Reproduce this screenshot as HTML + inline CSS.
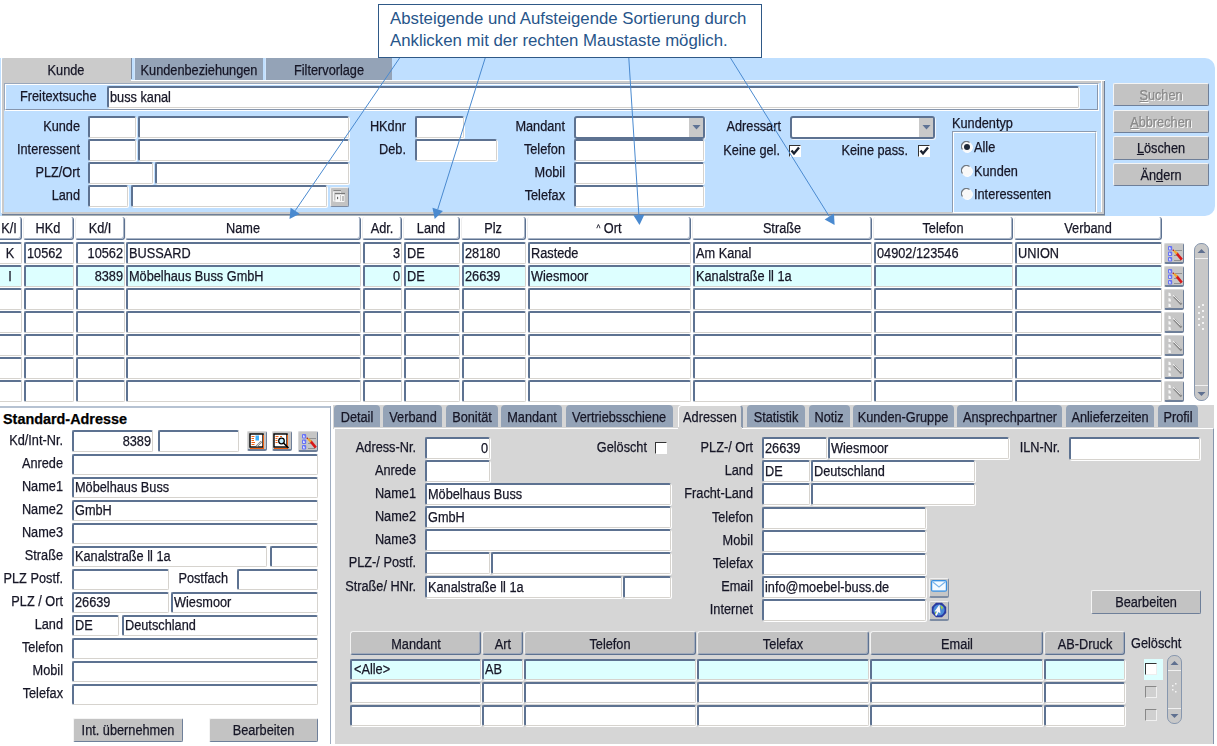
<!DOCTYPE html><html><head><meta charset="utf-8"><style>
html,body{margin:0;padding:0;width:1217px;height:746px;overflow:hidden;background:#fff;position:relative;}
.a{position:absolute;box-sizing:border-box;}
.t{position:absolute;white-space:nowrap;font-family:"Liberation Sans",sans-serif;line-height:20px;-webkit-text-stroke:0.25px currentColor;}
.inp{position:absolute;border-left:2px solid #5d7291;border-top:2px solid #5d7291;border-right:1px solid #d6d3ce;border-bottom:1px solid #d6d3ce;border-radius:2px;}
.btn{position:absolute;background:#c3c3c3;border-top:1px solid #f4f4f4;border-left:1px solid #f4f4f4;border-right:1px solid #6e7f99;border-bottom:1px solid #6e7f99;border-radius:2px;}
.hdr{position:absolute;box-sizing:border-box;background:#fff;border-left:1px solid #eeeeee;border-right:1px solid #5d7291;border-bottom:1px solid #5d7291;border-radius:3px;box-shadow:inset -1px -1px 0 #a9b5c6;}
</style></head><body>

<div class="a" style="left:0px;top:58px;width:1215px;height:158px;background:#bfdfff;border-radius:0 10px 10px 0;"></div>
<div class="a" style="left:1px;top:58px;width:1px;height:155px;background:#fff;"></div>
<div class="a" style="left:2px;top:80px;width:1103px;height:134px;background:#cacaca;"></div>
<div class="a" style="left:2px;top:80px;width:1103px;height:1px;background:#fff;"></div>
<div class="a" style="left:1101px;top:81px;width:1px;height:131px;background:#fff;"></div>
<div class="a" style="left:1104px;top:81px;width:1px;height:133px;background:#6e7f99;"></div>
<div class="a" style="left:2px;top:214px;width:1103px;height:1px;background:#6e7f99;"></div>
<div class="a" style="left:2px;top:215px;width:1103px;height:1px;background:#a9b1b4;"></div>
<div class="a" style="left:4px;top:83px;width:1097px;height:129px;background:#bfdfff;"></div>
<div class="a" style="left:2px;top:58px;width:129px;height:25px;background:#cbcbcb;border-radius:2px 0 0 0;"></div>
<div class="a" style="left:131px;top:58px;width:1px;height:21px;background:#7d8ca3;"></div>
<div class="t" style="left:5.5px;width:120px;text-align:center;top:60px;font-size:14.0px;color:#161626;font-weight:normal;transform:scaleX(0.91);transform-origin:50% 0;">Kunde</div>
<div class="a" style="left:134px;top:58px;width:129px;height:22px;background:#94a3b7;border-left:1px solid #d0e4fa;"></div>
<div class="t" style="left:99.0px;width:200px;text-align:center;top:60px;font-size:14.0px;color:#161626;font-weight:normal;transform:scaleX(0.91);transform-origin:50% 0;">Kundenbeziehungen</div>
<div class="a" style="left:265px;top:58px;width:127px;height:22px;background:#94a3b7;border-left:1px solid #d0e4fa;"></div>
<div class="t" style="left:229.0px;width:200px;text-align:center;top:60px;font-size:14.0px;color:#161626;font-weight:normal;transform:scaleX(0.91);transform-origin:50% 0;">Filtervorlage</div>
<div class="a" style="left:4px;top:83px;width:1095px;height:28px;border-top:1px solid #9aa8bc;border-left:1px solid #9aa8bc;border-right:1px solid #fff;border-bottom:1px solid #fff;"></div>
<div class="a" style="left:5px;top:84px;width:1093px;height:26px;border-top:1px solid #fff;border-left:1px solid #fff;border-right:1px solid #8796ad;border-bottom:1px solid #8796ad;"></div>
<div class="t" style="left:20px;top:86px;font-size:14.0px;color:#161626;font-weight:normal;transform:scaleX(0.91);transform-origin:0 0;">Freitextsuche</div>
<div class="inp" style="left:107px;top:86px;width:969px;height:19px;background:#fff;box-shadow:1px 1px 0 #fff;"></div>
<div class="t" style="left:110px;top:87px;font-size:14.0px;color:#161626;font-weight:normal;transform:scaleX(0.91);transform-origin:0 0;">buss kanal</div>
<div class="t" style="left:-320px;width:400px;text-align:right;top:116px;font-size:14.0px;color:#161626;font-weight:normal;transform:scaleX(0.91);transform-origin:100% 0;">Kunde</div>
<div class="t" style="left:-320px;width:400px;text-align:right;top:139px;font-size:14.0px;color:#161626;font-weight:normal;transform:scaleX(0.91);transform-origin:100% 0;">Interessent</div>
<div class="t" style="left:-320px;width:400px;text-align:right;top:162px;font-size:14.0px;color:#161626;font-weight:normal;transform:scaleX(0.91);transform-origin:100% 0;">PLZ/Ort</div>
<div class="t" style="left:-320px;width:400px;text-align:right;top:185px;font-size:14.0px;color:#161626;font-weight:normal;transform:scaleX(0.91);transform-origin:100% 0;">Land</div>
<div class="inp" style="left:88px;top:116px;width:45px;height:19px;background:#fff;box-shadow:1px 1px 0 #fff;"></div>
<div class="inp" style="left:138px;top:116px;width:208px;height:19px;background:#fff;box-shadow:1px 1px 0 #fff;"></div>
<div class="inp" style="left:88px;top:139px;width:45px;height:19px;background:#fff;box-shadow:1px 1px 0 #fff;"></div>
<div class="inp" style="left:138px;top:139px;width:208px;height:19px;background:#fff;box-shadow:1px 1px 0 #fff;"></div>
<div class="inp" style="left:88px;top:162px;width:62px;height:19px;background:#fff;box-shadow:1px 1px 0 #fff;"></div>
<div class="inp" style="left:155px;top:162px;width:191px;height:19px;background:#fff;box-shadow:1px 1px 0 #fff;"></div>
<div class="inp" style="left:88px;top:185px;width:37px;height:19px;background:#fff;box-shadow:1px 1px 0 #fff;"></div>
<div class="inp" style="left:131px;top:185px;width:193px;height:19px;background:#fff;box-shadow:1px 1px 0 #fff;"></div>
<div class="a" style="left:330px;top:187px;width:19px;height:20px;background:#c3c3c3;border-top:1px solid #f0f0f0;border-left:1px solid #f0f0f0;border-right:1px solid #7d8ca3;border-bottom:1px solid #7d8ca3;border-radius:2px;"></div>
<svg class="a" style="left:330px;top:187px" width="19" height="20" viewBox="0 0 19 20"><line x1="3.5" y1="3.5" x2="11" y2="3.5" stroke="#8a8a8a" stroke-width="1"/><rect x="3.5" y="5" width="7" height="9" fill="none" stroke="#f4f4f4" stroke-width="1"/><line x1="5" y1="6.5" x2="15" y2="6.5" stroke="#7a7a7a" stroke-width="1.2"/><rect x="5.5" y="7.5" width="9" height="7.5" fill="#f8f8f8"/><path d="M7 9.5 L8.5 11 L7 12.5 Z" fill="#555"/><line x1="10.5" y1="8.5" x2="10.5" y2="14" stroke="#999" stroke-dasharray="1 1"/><line x1="13" y1="9" x2="13" y2="14" stroke="#888"/></svg>
<div class="t" style="left:6px;width:400px;text-align:right;top:116px;font-size:14.0px;color:#161626;font-weight:normal;transform:scaleX(0.91);transform-origin:100% 0;">HKdnr</div>
<div class="t" style="left:6px;width:400px;text-align:right;top:139px;font-size:14.0px;color:#161626;font-weight:normal;transform:scaleX(0.91);transform-origin:100% 0;">Deb.</div>
<div class="inp" style="left:415px;top:116px;width:46px;height:19px;background:#fff;box-shadow:1px 1px 0 #fff;"></div>
<div class="inp" style="left:415px;top:139px;width:79px;height:19px;background:#fff;box-shadow:1px 1px 0 #fff;"></div>
<div class="t" style="left:165px;width:400px;text-align:right;top:116px;font-size:14.0px;color:#161626;font-weight:normal;transform:scaleX(0.91);transform-origin:100% 0;">Mandant</div>
<div class="a" style="left:574px;top:116px;width:131px;height:23px;background:#fff;border:2px solid #5d7291;border-radius:3px;box-shadow:1px 1px 0 #eef6ff;"></div>
<div class="a" style="left:689px;top:118px;width:14px;height:19px;background:#c9c9c9;"></div>
<svg class="a" style="left:692px;top:125px" width="9" height="5"><path d="M0.5 0 L8.5 0 L4.5 4.5 Z" fill="#5f7395"/></svg>
<div class="t" style="left:165px;width:400px;text-align:right;top:139px;font-size:14.0px;color:#161626;font-weight:normal;transform:scaleX(0.91);transform-origin:100% 0;">Telefon</div>
<div class="inp" style="left:574px;top:139px;width:127px;height:19px;background:#fff;box-shadow:1px 1px 0 #fff;"></div>
<div class="t" style="left:165px;width:400px;text-align:right;top:162px;font-size:14.0px;color:#161626;font-weight:normal;transform:scaleX(0.91);transform-origin:100% 0;">Mobil</div>
<div class="inp" style="left:574px;top:162px;width:127px;height:19px;background:#fff;box-shadow:1px 1px 0 #fff;"></div>
<div class="t" style="left:165px;width:400px;text-align:right;top:185px;font-size:14.0px;color:#161626;font-weight:normal;transform:scaleX(0.91);transform-origin:100% 0;">Telefax</div>
<div class="inp" style="left:574px;top:185px;width:127px;height:19px;background:#fff;box-shadow:1px 1px 0 #fff;"></div>
<div class="t" style="left:381px;width:400px;text-align:right;top:116px;font-size:14.0px;color:#161626;font-weight:normal;transform:scaleX(0.91);transform-origin:100% 0;">Adressart</div>
<div class="a" style="left:790px;top:116px;width:145px;height:23px;background:#fff;border:2px solid #5d7291;border-radius:3px;box-shadow:1px 1px 0 #eef6ff;"></div>
<div class="a" style="left:919px;top:118px;width:14px;height:19px;background:#c9c9c9;"></div>
<svg class="a" style="left:922px;top:125px" width="9" height="5"><path d="M0.5 0 L8.5 0 L4.5 4.5 Z" fill="#5f7395"/></svg>
<div class="t" style="left:380px;width:400px;text-align:right;top:140px;font-size:14.0px;color:#161626;font-weight:normal;transform:scaleX(0.91);transform-origin:100% 0;">Keine gel.</div>
<div class="t" style="left:508px;width:400px;text-align:right;top:140px;font-size:14.0px;color:#161626;font-weight:normal;transform:scaleX(0.91);transform-origin:100% 0;">Keine pass.</div>
<div class="a" style="left:789px;top:145px;width:12px;height:12px;background:#fff;border-top:1px solid #333;border-left:1px solid #333;border-right:1px solid #fff;border-bottom:1px solid #fff;"></div>
<svg class="a" style="left:790px;top:146px" width="10" height="10"><path d="M1.5 4.5 L4 7.5 L9 1.5" fill="none" stroke="#1a2230" stroke-width="2.4"/></svg>
<div class="a" style="left:918px;top:145px;width:12px;height:12px;background:#fff;border-top:1px solid #333;border-left:1px solid #333;border-right:1px solid #fff;border-bottom:1px solid #fff;"></div>
<svg class="a" style="left:919px;top:146px" width="10" height="10"><path d="M1.5 4.5 L4 7.5 L9 1.5" fill="none" stroke="#1a2230" stroke-width="2.4"/></svg>
<div class="t" style="left:952px;top:113px;font-size:14.0px;color:#161626;font-weight:normal;transform:scaleX(0.91);transform-origin:0 0;">Kundentyp</div>
<div class="a" style="left:952px;top:131px;width:145px;height:82px;border-top:1px solid #8c9bb0;border-left:1px solid #8c9bb0;border-right:1px solid #fff;border-bottom:1px solid #fff;"></div>
<div class="a" style="left:953px;top:132px;width:143px;height:80px;border-top:1px solid #fff;border-left:1px solid #fff;border-right:1px solid #a8b4c4;"></div>
<svg class="a" style="left:961px;top:141px" width="12" height="12" viewBox="0 0 12 12"><circle cx="6" cy="6" r="5.5" fill="#f8f8f8"/><path d="M1.5 8.5 A5 5 0 0 1 8.5 1.5" fill="none" stroke="#707880" stroke-width="1.2"/><path d="M10.8 4 A5 5 0 0 1 4 10.8" fill="none" stroke="#ffffff" stroke-width="1"/><circle cx="6" cy="6" r="3" fill="#1e2838"/></svg>
<div class="t" style="left:974px;top:137px;font-size:14.0px;color:#161626;font-weight:normal;transform:scaleX(0.91);transform-origin:0 0;">Alle</div>
<svg class="a" style="left:961px;top:165px" width="12" height="12" viewBox="0 0 12 12"><circle cx="6" cy="6" r="5.5" fill="#f8f8f8"/><path d="M1.5 8.5 A5 5 0 0 1 8.5 1.5" fill="none" stroke="#707880" stroke-width="1.2"/><path d="M10.8 4 A5 5 0 0 1 4 10.8" fill="none" stroke="#ffffff" stroke-width="1"/></svg>
<div class="t" style="left:974px;top:161px;font-size:14.0px;color:#161626;font-weight:normal;transform:scaleX(0.91);transform-origin:0 0;">Kunden</div>
<svg class="a" style="left:961px;top:188px" width="12" height="12" viewBox="0 0 12 12"><circle cx="6" cy="6" r="5.5" fill="#f8f8f8"/><path d="M1.5 8.5 A5 5 0 0 1 8.5 1.5" fill="none" stroke="#707880" stroke-width="1.2"/><path d="M10.8 4 A5 5 0 0 1 4 10.8" fill="none" stroke="#ffffff" stroke-width="1"/></svg>
<div class="t" style="left:974px;top:184px;font-size:14.0px;color:#161626;font-weight:normal;transform:scaleX(0.91);transform-origin:0 0;">Interessenten</div>
<div class="btn" style="left:1113px;top:83px;width:94px;height:21px;"></div>
<div class="t" style="left:1113.0px;width:96px;text-align:center;top:85px;font-size:14.0px;color:#8a8a8a;font-weight:normal;transform:scaleX(0.91);transform-origin:50% 0;text-shadow:1px 1px 0 #fff;"><u>S</u>uchen</div>
<div class="btn" style="left:1113px;top:110px;width:94px;height:21px;"></div>
<div class="t" style="left:1113.0px;width:96px;text-align:center;top:112px;font-size:14.0px;color:#8a8a8a;font-weight:normal;transform:scaleX(0.91);transform-origin:50% 0;text-shadow:1px 1px 0 #fff;"><u>A</u>bbrechen</div>
<div class="btn" style="left:1113px;top:136px;width:94px;height:22px;"></div>
<div class="t" style="left:1113.0px;width:96px;text-align:center;top:138px;font-size:14.0px;color:#161626;font-weight:normal;transform:scaleX(0.91);transform-origin:50% 0;"><u>L</u>öschen</div>
<div class="btn" style="left:1113px;top:163px;width:94px;height:21px;"></div>
<div class="t" style="left:1113.0px;width:96px;text-align:center;top:165px;font-size:14.0px;color:#161626;font-weight:normal;transform:scaleX(0.91);transform-origin:50% 0;">Än<u>d</u>ern</div>
<div class="hdr" style="left:-3px;top:217px;width:25px;height:23px;"></div>
<div class="t" style="left:-91.0px;width:200px;text-align:center;top:218px;font-size:14.0px;color:#161626;font-weight:normal;transform:scaleX(0.91);transform-origin:50% 0;">K/I</div>
<div class="hdr" style="left:23px;top:217px;width:51px;height:23px;"></div>
<div class="t" style="left:-52.0px;width:200px;text-align:center;top:218px;font-size:14.0px;color:#161626;font-weight:normal;transform:scaleX(0.91);transform-origin:50% 0;">HKd</div>
<div class="hdr" style="left:75px;top:217px;width:50px;height:23px;"></div>
<div class="t" style="left:-0.5px;width:200px;text-align:center;top:218px;font-size:14.0px;color:#161626;font-weight:normal;transform:scaleX(0.91);transform-origin:50% 0;">Kd/I</div>
<div class="hdr" style="left:125px;top:217px;width:236px;height:23px;"></div>
<div class="t" style="left:142.5px;width:200px;text-align:center;top:218px;font-size:14.0px;color:#161626;font-weight:normal;transform:scaleX(0.91);transform-origin:50% 0;">Name</div>
<div class="hdr" style="left:362px;top:217px;width:40px;height:23px;"></div>
<div class="t" style="left:281.5px;width:200px;text-align:center;top:218px;font-size:14.0px;color:#161626;font-weight:normal;transform:scaleX(0.91);transform-origin:50% 0;">Adr.</div>
<div class="hdr" style="left:403px;top:217px;width:57px;height:23px;"></div>
<div class="t" style="left:331.0px;width:200px;text-align:center;top:218px;font-size:14.0px;color:#161626;font-weight:normal;transform:scaleX(0.91);transform-origin:50% 0;">Land</div>
<div class="hdr" style="left:461px;top:217px;width:65px;height:23px;"></div>
<div class="t" style="left:393.0px;width:200px;text-align:center;top:218px;font-size:14.0px;color:#161626;font-weight:normal;transform:scaleX(0.91);transform-origin:50% 0;">Plz</div>
<div class="hdr" style="left:527px;top:217px;width:164px;height:23px;"></div>
<div class="t" style="left:509.0px;width:200px;text-align:center;top:218px;font-size:14.0px;color:#161626;font-weight:normal;transform:scaleX(0.91);transform-origin:50% 0;"><span style="font-size:9px;position:relative;top:-2px">^</span> Ort</div>
<div class="hdr" style="left:692px;top:217px;width:180px;height:23px;"></div>
<div class="t" style="left:681.5px;width:200px;text-align:center;top:218px;font-size:14.0px;color:#161626;font-weight:normal;transform:scaleX(0.91);transform-origin:50% 0;">Straße</div>
<div class="hdr" style="left:873px;top:217px;width:140px;height:23px;"></div>
<div class="t" style="left:842.5px;width:200px;text-align:center;top:218px;font-size:14.0px;color:#161626;font-weight:normal;transform:scaleX(0.91);transform-origin:50% 0;">Telefon</div>
<div class="hdr" style="left:1014px;top:217px;width:148px;height:23px;"></div>
<div class="t" style="left:987.5px;width:200px;text-align:center;top:218px;font-size:14.0px;color:#161626;font-weight:normal;transform:scaleX(0.91);transform-origin:50% 0;">Verband</div>
<div class="inp" style="left:-2px;top:242px;width:21px;height:19px;background:#fff;box-shadow:1px 1px 0 #fff;"></div>
<div class="t" style="left:-10.5px;width:40px;text-align:center;top:243px;font-size:14.0px;color:#161626;font-weight:normal;transform:scaleX(0.91);transform-origin:50% 0;">K</div>
<div class="inp" style="left:24px;top:242px;width:47px;height:19px;background:#fff;box-shadow:1px 1px 0 #fff;"></div>
<div class="t" style="left:27px;top:243px;font-size:14.0px;color:#161626;font-weight:normal;transform:scaleX(0.91);transform-origin:0 0;">10562</div>
<div class="inp" style="left:76px;top:242px;width:46px;height:19px;background:#fff;box-shadow:1px 1px 0 #fff;"></div>
<div class="t" style="left:-277px;width:400px;text-align:right;top:243px;font-size:14.0px;color:#161626;font-weight:normal;transform:scaleX(0.91);transform-origin:100% 0;">10562</div>
<div class="inp" style="left:126px;top:242px;width:232px;height:19px;background:#fff;box-shadow:1px 1px 0 #fff;"></div>
<div class="t" style="left:129px;top:243px;font-size:14.0px;color:#161626;font-weight:normal;transform:scaleX(0.91);transform-origin:0 0;">BUSSARD</div>
<div class="inp" style="left:363px;top:242px;width:36px;height:19px;background:#fff;box-shadow:1px 1px 0 #fff;"></div>
<div class="t" style="left:0px;width:400px;text-align:right;top:243px;font-size:14.0px;color:#161626;font-weight:normal;transform:scaleX(0.91);transform-origin:100% 0;">3</div>
<div class="inp" style="left:404px;top:242px;width:53px;height:19px;background:#fff;box-shadow:1px 1px 0 #fff;"></div>
<div class="t" style="left:407px;top:243px;font-size:14.0px;color:#161626;font-weight:normal;transform:scaleX(0.91);transform-origin:0 0;">DE</div>
<div class="inp" style="left:462px;top:242px;width:61px;height:19px;background:#fff;box-shadow:1px 1px 0 #fff;"></div>
<div class="t" style="left:465px;top:243px;font-size:14.0px;color:#161626;font-weight:normal;transform:scaleX(0.91);transform-origin:0 0;">28180</div>
<div class="inp" style="left:528px;top:242px;width:160px;height:19px;background:#fff;box-shadow:1px 1px 0 #fff;"></div>
<div class="t" style="left:531px;top:243px;font-size:14.0px;color:#161626;font-weight:normal;transform:scaleX(0.91);transform-origin:0 0;">Rastede</div>
<div class="inp" style="left:693px;top:242px;width:176px;height:19px;background:#fff;box-shadow:1px 1px 0 #fff;"></div>
<div class="t" style="left:696px;top:243px;font-size:14.0px;color:#161626;font-weight:normal;transform:scaleX(0.91);transform-origin:0 0;">Am Kanal</div>
<div class="inp" style="left:874px;top:242px;width:136px;height:19px;background:#fff;box-shadow:1px 1px 0 #fff;"></div>
<div class="t" style="left:877px;top:243px;font-size:14.0px;color:#161626;font-weight:normal;transform:scaleX(0.91);transform-origin:0 0;">04902/123546</div>
<div class="inp" style="left:1015px;top:242px;width:144px;height:19px;background:#fff;box-shadow:1px 1px 0 #fff;"></div>
<div class="t" style="left:1018px;top:243px;font-size:14.0px;color:#161626;font-weight:normal;transform:scaleX(0.91);transform-origin:0 0;">UNION</div>
<div class="a" style="left:1164px;top:243px;width:20px;height:21px;background:#c6c6c6;border-top:1px solid #d8d8d8;border-left:1px solid #d8d8d8;border-right:1px solid #6e7f99;border-bottom:2px solid #6e7f99;border-radius:2px;"></div>
<svg class="a" style="left:1164px;top:243px" width="20" height="21" viewBox="0 0 20 21"><rect x="4" y="3" width="4.2" height="4.6" rx="1" fill="#6672f6"/><rect x="4" y="8.5" width="4.2" height="4.6" rx="1" fill="#6672f6"/><rect x="4" y="14" width="4.2" height="4.6" rx="1" fill="#6672f6"/><path d="M5.2 4 L6.5 4.8 L6.8 6.6 L5.2 6.6 Z" fill="#f4f4ff"/><path d="M5.2 9.5 L6.5 10.3 L6.8 12.1 L5.2 12.1 Z" fill="#f4f4ff"/><path d="M5.2 15 L6.5 15.8 L6.8 17.6 L5.2 17.6 Z" fill="#f4f4ff"/><line x1="11" y1="7.5" x2="18" y2="7.5" stroke="#8c8c8c" stroke-width="0.9"/><line x1="10" y1="12.5" x2="13" y2="12.5" stroke="#8c8c8c" stroke-width="0.9"/><line x1="10" y1="17.5" x2="17" y2="17.5" stroke="#8c8c8c" stroke-width="0.9"/><line x1="12.5" y1="10.2" x2="17.8" y2="16.6" stroke="#d81818" stroke-width="2.6"/><line x1="10" y1="7.8" x2="13" y2="10.6" stroke="#f0a830" stroke-width="2.2"/><circle cx="9.3" cy="7.3" r="0.8" fill="#b01010"/></svg>
<div class="inp" style="left:-2px;top:265px;width:21px;height:19px;background:#ddffff;box-shadow:1px 1px 0 #fff;"></div>
<div class="t" style="left:-10.5px;width:40px;text-align:center;top:266px;font-size:14.0px;color:#161626;font-weight:normal;transform:scaleX(0.91);transform-origin:50% 0;">I</div>
<div class="inp" style="left:24px;top:265px;width:47px;height:19px;background:#ddffff;box-shadow:1px 1px 0 #fff;"></div>
<div class="inp" style="left:76px;top:265px;width:46px;height:19px;background:#ddffff;box-shadow:1px 1px 0 #fff;"></div>
<div class="t" style="left:-277px;width:400px;text-align:right;top:266px;font-size:14.0px;color:#161626;font-weight:normal;transform:scaleX(0.91);transform-origin:100% 0;">8389</div>
<div class="inp" style="left:126px;top:265px;width:232px;height:19px;background:#ddffff;box-shadow:1px 1px 0 #fff;"></div>
<div class="t" style="left:129px;top:266px;font-size:14.0px;color:#161626;font-weight:normal;transform:scaleX(0.91);transform-origin:0 0;">Möbelhaus Buss GmbH</div>
<div class="inp" style="left:363px;top:265px;width:36px;height:19px;background:#ddffff;box-shadow:1px 1px 0 #fff;"></div>
<div class="t" style="left:0px;width:400px;text-align:right;top:266px;font-size:14.0px;color:#161626;font-weight:normal;transform:scaleX(0.91);transform-origin:100% 0;">0</div>
<div class="inp" style="left:404px;top:265px;width:53px;height:19px;background:#ddffff;box-shadow:1px 1px 0 #fff;"></div>
<div class="t" style="left:407px;top:266px;font-size:14.0px;color:#161626;font-weight:normal;transform:scaleX(0.91);transform-origin:0 0;">DE</div>
<div class="inp" style="left:462px;top:265px;width:61px;height:19px;background:#ddffff;box-shadow:1px 1px 0 #fff;"></div>
<div class="t" style="left:465px;top:266px;font-size:14.0px;color:#161626;font-weight:normal;transform:scaleX(0.91);transform-origin:0 0;">26639</div>
<div class="inp" style="left:528px;top:265px;width:160px;height:19px;background:#ddffff;box-shadow:1px 1px 0 #fff;"></div>
<div class="t" style="left:531px;top:266px;font-size:14.0px;color:#161626;font-weight:normal;transform:scaleX(0.91);transform-origin:0 0;">Wiesmoor</div>
<div class="inp" style="left:693px;top:265px;width:176px;height:19px;background:#ddffff;box-shadow:1px 1px 0 #fff;"></div>
<div class="t" style="left:696px;top:266px;font-size:14.0px;color:#161626;font-weight:normal;transform:scaleX(0.91);transform-origin:0 0;">Kanalstraße ll 1a</div>
<div class="inp" style="left:874px;top:265px;width:136px;height:19px;background:#ddffff;box-shadow:1px 1px 0 #fff;"></div>
<div class="inp" style="left:1015px;top:265px;width:144px;height:19px;background:#ddffff;box-shadow:1px 1px 0 #fff;"></div>
<div class="a" style="left:1164px;top:266px;width:20px;height:21px;background:#c6c6c6;border-top:1px solid #d8d8d8;border-left:1px solid #d8d8d8;border-right:1px solid #6e7f99;border-bottom:2px solid #6e7f99;border-radius:2px;"></div>
<svg class="a" style="left:1164px;top:266px" width="20" height="21" viewBox="0 0 20 21"><rect x="4" y="3" width="4.2" height="4.6" rx="1" fill="#6672f6"/><rect x="4" y="8.5" width="4.2" height="4.6" rx="1" fill="#6672f6"/><rect x="4" y="14" width="4.2" height="4.6" rx="1" fill="#6672f6"/><path d="M5.2 4 L6.5 4.8 L6.8 6.6 L5.2 6.6 Z" fill="#f4f4ff"/><path d="M5.2 9.5 L6.5 10.3 L6.8 12.1 L5.2 12.1 Z" fill="#f4f4ff"/><path d="M5.2 15 L6.5 15.8 L6.8 17.6 L5.2 17.6 Z" fill="#f4f4ff"/><line x1="11" y1="7.5" x2="18" y2="7.5" stroke="#8c8c8c" stroke-width="0.9"/><line x1="10" y1="12.5" x2="13" y2="12.5" stroke="#8c8c8c" stroke-width="0.9"/><line x1="10" y1="17.5" x2="17" y2="17.5" stroke="#8c8c8c" stroke-width="0.9"/><line x1="12.5" y1="10.2" x2="17.8" y2="16.6" stroke="#d81818" stroke-width="2.6"/><line x1="10" y1="7.8" x2="13" y2="10.6" stroke="#f0a830" stroke-width="2.2"/><circle cx="9.3" cy="7.3" r="0.8" fill="#b01010"/></svg>
<div class="inp" style="left:-2px;top:288px;width:21px;height:19px;background:#fff;box-shadow:1px 1px 0 #fff;"></div>
<div class="inp" style="left:24px;top:288px;width:47px;height:19px;background:#fff;box-shadow:1px 1px 0 #fff;"></div>
<div class="inp" style="left:76px;top:288px;width:46px;height:19px;background:#fff;box-shadow:1px 1px 0 #fff;"></div>
<div class="inp" style="left:126px;top:288px;width:232px;height:19px;background:#fff;box-shadow:1px 1px 0 #fff;"></div>
<div class="inp" style="left:363px;top:288px;width:36px;height:19px;background:#fff;box-shadow:1px 1px 0 #fff;"></div>
<div class="inp" style="left:404px;top:288px;width:53px;height:19px;background:#fff;box-shadow:1px 1px 0 #fff;"></div>
<div class="inp" style="left:462px;top:288px;width:61px;height:19px;background:#fff;box-shadow:1px 1px 0 #fff;"></div>
<div class="inp" style="left:528px;top:288px;width:160px;height:19px;background:#fff;box-shadow:1px 1px 0 #fff;"></div>
<div class="inp" style="left:693px;top:288px;width:176px;height:19px;background:#fff;box-shadow:1px 1px 0 #fff;"></div>
<div class="inp" style="left:874px;top:288px;width:136px;height:19px;background:#fff;box-shadow:1px 1px 0 #fff;"></div>
<div class="inp" style="left:1015px;top:288px;width:144px;height:19px;background:#fff;box-shadow:1px 1px 0 #fff;"></div>
<div class="a" style="left:1164px;top:289px;width:20px;height:21px;background:#c6c6c6;border-top:1px solid #d8d8d8;border-left:1px solid #d8d8d8;border-right:1px solid #6e7f99;border-bottom:2px solid #6e7f99;border-radius:2px;"></div>
<svg class="a" style="left:1164px;top:289px" width="20" height="21" viewBox="0 0 20 21"><path d="M4.5 3.5 L6.5 4.3 L7 7 L4.5 7 Z" fill="#f8f8f8"/><path d="M4.5 9 L6.5 9.8 L7 12.5 L4.5 12.5 Z" fill="#f8f8f8"/><path d="M4.5 14.5 L6.5 15.3 L7 18 L4.5 18 Z" fill="#f8f8f8"/><line x1="10" y1="7.5" x2="17.5" y2="15.5" stroke="#8a8a8a" stroke-width="2.2"/><line x1="9" y1="6" x2="16.5" y2="13.5" stroke="#f0f0f0" stroke-width="0.9"/></svg>
<div class="inp" style="left:-2px;top:311px;width:21px;height:19px;background:#fff;box-shadow:1px 1px 0 #fff;"></div>
<div class="inp" style="left:24px;top:311px;width:47px;height:19px;background:#fff;box-shadow:1px 1px 0 #fff;"></div>
<div class="inp" style="left:76px;top:311px;width:46px;height:19px;background:#fff;box-shadow:1px 1px 0 #fff;"></div>
<div class="inp" style="left:126px;top:311px;width:232px;height:19px;background:#fff;box-shadow:1px 1px 0 #fff;"></div>
<div class="inp" style="left:363px;top:311px;width:36px;height:19px;background:#fff;box-shadow:1px 1px 0 #fff;"></div>
<div class="inp" style="left:404px;top:311px;width:53px;height:19px;background:#fff;box-shadow:1px 1px 0 #fff;"></div>
<div class="inp" style="left:462px;top:311px;width:61px;height:19px;background:#fff;box-shadow:1px 1px 0 #fff;"></div>
<div class="inp" style="left:528px;top:311px;width:160px;height:19px;background:#fff;box-shadow:1px 1px 0 #fff;"></div>
<div class="inp" style="left:693px;top:311px;width:176px;height:19px;background:#fff;box-shadow:1px 1px 0 #fff;"></div>
<div class="inp" style="left:874px;top:311px;width:136px;height:19px;background:#fff;box-shadow:1px 1px 0 #fff;"></div>
<div class="inp" style="left:1015px;top:311px;width:144px;height:19px;background:#fff;box-shadow:1px 1px 0 #fff;"></div>
<div class="a" style="left:1164px;top:312px;width:20px;height:21px;background:#c6c6c6;border-top:1px solid #d8d8d8;border-left:1px solid #d8d8d8;border-right:1px solid #6e7f99;border-bottom:2px solid #6e7f99;border-radius:2px;"></div>
<svg class="a" style="left:1164px;top:312px" width="20" height="21" viewBox="0 0 20 21"><path d="M4.5 3.5 L6.5 4.3 L7 7 L4.5 7 Z" fill="#f8f8f8"/><path d="M4.5 9 L6.5 9.8 L7 12.5 L4.5 12.5 Z" fill="#f8f8f8"/><path d="M4.5 14.5 L6.5 15.3 L7 18 L4.5 18 Z" fill="#f8f8f8"/><line x1="10" y1="7.5" x2="17.5" y2="15.5" stroke="#8a8a8a" stroke-width="2.2"/><line x1="9" y1="6" x2="16.5" y2="13.5" stroke="#f0f0f0" stroke-width="0.9"/></svg>
<div class="inp" style="left:-2px;top:334px;width:21px;height:19px;background:#fff;box-shadow:1px 1px 0 #fff;"></div>
<div class="inp" style="left:24px;top:334px;width:47px;height:19px;background:#fff;box-shadow:1px 1px 0 #fff;"></div>
<div class="inp" style="left:76px;top:334px;width:46px;height:19px;background:#fff;box-shadow:1px 1px 0 #fff;"></div>
<div class="inp" style="left:126px;top:334px;width:232px;height:19px;background:#fff;box-shadow:1px 1px 0 #fff;"></div>
<div class="inp" style="left:363px;top:334px;width:36px;height:19px;background:#fff;box-shadow:1px 1px 0 #fff;"></div>
<div class="inp" style="left:404px;top:334px;width:53px;height:19px;background:#fff;box-shadow:1px 1px 0 #fff;"></div>
<div class="inp" style="left:462px;top:334px;width:61px;height:19px;background:#fff;box-shadow:1px 1px 0 #fff;"></div>
<div class="inp" style="left:528px;top:334px;width:160px;height:19px;background:#fff;box-shadow:1px 1px 0 #fff;"></div>
<div class="inp" style="left:693px;top:334px;width:176px;height:19px;background:#fff;box-shadow:1px 1px 0 #fff;"></div>
<div class="inp" style="left:874px;top:334px;width:136px;height:19px;background:#fff;box-shadow:1px 1px 0 #fff;"></div>
<div class="inp" style="left:1015px;top:334px;width:144px;height:19px;background:#fff;box-shadow:1px 1px 0 #fff;"></div>
<div class="a" style="left:1164px;top:335px;width:20px;height:21px;background:#c6c6c6;border-top:1px solid #d8d8d8;border-left:1px solid #d8d8d8;border-right:1px solid #6e7f99;border-bottom:2px solid #6e7f99;border-radius:2px;"></div>
<svg class="a" style="left:1164px;top:335px" width="20" height="21" viewBox="0 0 20 21"><path d="M4.5 3.5 L6.5 4.3 L7 7 L4.5 7 Z" fill="#f8f8f8"/><path d="M4.5 9 L6.5 9.8 L7 12.5 L4.5 12.5 Z" fill="#f8f8f8"/><path d="M4.5 14.5 L6.5 15.3 L7 18 L4.5 18 Z" fill="#f8f8f8"/><line x1="10" y1="7.5" x2="17.5" y2="15.5" stroke="#8a8a8a" stroke-width="2.2"/><line x1="9" y1="6" x2="16.5" y2="13.5" stroke="#f0f0f0" stroke-width="0.9"/></svg>
<div class="inp" style="left:-2px;top:357px;width:21px;height:19px;background:#fff;box-shadow:1px 1px 0 #fff;"></div>
<div class="inp" style="left:24px;top:357px;width:47px;height:19px;background:#fff;box-shadow:1px 1px 0 #fff;"></div>
<div class="inp" style="left:76px;top:357px;width:46px;height:19px;background:#fff;box-shadow:1px 1px 0 #fff;"></div>
<div class="inp" style="left:126px;top:357px;width:232px;height:19px;background:#fff;box-shadow:1px 1px 0 #fff;"></div>
<div class="inp" style="left:363px;top:357px;width:36px;height:19px;background:#fff;box-shadow:1px 1px 0 #fff;"></div>
<div class="inp" style="left:404px;top:357px;width:53px;height:19px;background:#fff;box-shadow:1px 1px 0 #fff;"></div>
<div class="inp" style="left:462px;top:357px;width:61px;height:19px;background:#fff;box-shadow:1px 1px 0 #fff;"></div>
<div class="inp" style="left:528px;top:357px;width:160px;height:19px;background:#fff;box-shadow:1px 1px 0 #fff;"></div>
<div class="inp" style="left:693px;top:357px;width:176px;height:19px;background:#fff;box-shadow:1px 1px 0 #fff;"></div>
<div class="inp" style="left:874px;top:357px;width:136px;height:19px;background:#fff;box-shadow:1px 1px 0 #fff;"></div>
<div class="inp" style="left:1015px;top:357px;width:144px;height:19px;background:#fff;box-shadow:1px 1px 0 #fff;"></div>
<div class="a" style="left:1164px;top:358px;width:20px;height:21px;background:#c6c6c6;border-top:1px solid #d8d8d8;border-left:1px solid #d8d8d8;border-right:1px solid #6e7f99;border-bottom:2px solid #6e7f99;border-radius:2px;"></div>
<svg class="a" style="left:1164px;top:358px" width="20" height="21" viewBox="0 0 20 21"><path d="M4.5 3.5 L6.5 4.3 L7 7 L4.5 7 Z" fill="#f8f8f8"/><path d="M4.5 9 L6.5 9.8 L7 12.5 L4.5 12.5 Z" fill="#f8f8f8"/><path d="M4.5 14.5 L6.5 15.3 L7 18 L4.5 18 Z" fill="#f8f8f8"/><line x1="10" y1="7.5" x2="17.5" y2="15.5" stroke="#8a8a8a" stroke-width="2.2"/><line x1="9" y1="6" x2="16.5" y2="13.5" stroke="#f0f0f0" stroke-width="0.9"/></svg>
<div class="inp" style="left:-2px;top:380px;width:21px;height:19px;background:#fff;box-shadow:1px 1px 0 #fff;"></div>
<div class="inp" style="left:24px;top:380px;width:47px;height:19px;background:#fff;box-shadow:1px 1px 0 #fff;"></div>
<div class="inp" style="left:76px;top:380px;width:46px;height:19px;background:#fff;box-shadow:1px 1px 0 #fff;"></div>
<div class="inp" style="left:126px;top:380px;width:232px;height:19px;background:#fff;box-shadow:1px 1px 0 #fff;"></div>
<div class="inp" style="left:363px;top:380px;width:36px;height:19px;background:#fff;box-shadow:1px 1px 0 #fff;"></div>
<div class="inp" style="left:404px;top:380px;width:53px;height:19px;background:#fff;box-shadow:1px 1px 0 #fff;"></div>
<div class="inp" style="left:462px;top:380px;width:61px;height:19px;background:#fff;box-shadow:1px 1px 0 #fff;"></div>
<div class="inp" style="left:528px;top:380px;width:160px;height:19px;background:#fff;box-shadow:1px 1px 0 #fff;"></div>
<div class="inp" style="left:693px;top:380px;width:176px;height:19px;background:#fff;box-shadow:1px 1px 0 #fff;"></div>
<div class="inp" style="left:874px;top:380px;width:136px;height:19px;background:#fff;box-shadow:1px 1px 0 #fff;"></div>
<div class="inp" style="left:1015px;top:380px;width:144px;height:19px;background:#fff;box-shadow:1px 1px 0 #fff;"></div>
<div class="a" style="left:1164px;top:381px;width:20px;height:21px;background:#c6c6c6;border-top:1px solid #d8d8d8;border-left:1px solid #d8d8d8;border-right:1px solid #6e7f99;border-bottom:2px solid #6e7f99;border-radius:2px;"></div>
<svg class="a" style="left:1164px;top:381px" width="20" height="21" viewBox="0 0 20 21"><path d="M4.5 3.5 L6.5 4.3 L7 7 L4.5 7 Z" fill="#f8f8f8"/><path d="M4.5 9 L6.5 9.8 L7 12.5 L4.5 12.5 Z" fill="#f8f8f8"/><path d="M4.5 14.5 L6.5 15.3 L7 18 L4.5 18 Z" fill="#f8f8f8"/><line x1="10" y1="7.5" x2="17.5" y2="15.5" stroke="#8a8a8a" stroke-width="2.2"/><line x1="9" y1="6" x2="16.5" y2="13.5" stroke="#f0f0f0" stroke-width="0.9"/></svg>
<div class="a" style="left:1194px;top:243px;width:15px;height:158px;background:#c8c8c8;border:1px solid #8797ae;border-radius:7px;"></div>
<div class="a" style="left:1195px;top:258px;width:13px;height:1px;background:#f0f0f0;"></div>
<div class="a" style="left:1195px;top:385px;width:13px;height:1px;background:#f0f0f0;"></div>
<svg class="a" style="left:1196px;top:246px" width="11" height="10"><path d="M1.5 7 L5.5 3 L9.5 7 Z" fill="#5f7090"/></svg>
<svg class="a" style="left:1196px;top:389px" width="11" height="10"><path d="M1.5 3 L5.5 7 L9.5 3 Z" fill="#5f7090"/></svg>
<svg class="a" style="left:1197px;top:300px" width="10" height="40"><rect x="1" y="6" width="2" height="2" fill="#f4f4f4"/><rect x="5" y="4" width="2" height="2" fill="#f4f4f4"/><rect x="1" y="12" width="2" height="2" fill="#f4f4f4"/><rect x="5" y="10" width="2" height="2" fill="#f4f4f4"/><rect x="1" y="18" width="2" height="2" fill="#f4f4f4"/><rect x="5" y="16" width="2" height="2" fill="#f4f4f4"/><rect x="1" y="24" width="2" height="2" fill="#f4f4f4"/><rect x="5" y="22" width="2" height="2" fill="#f4f4f4"/><rect x="5" y="28" width="2" height="2" fill="#f4f4f4"/></svg>
<div class="a" style="left:0px;top:406px;width:331px;height:2px;background:#b6c2d2;"></div>
<div class="a" style="left:330px;top:406px;width:1px;height:338px;background:#9eacc0;"></div>
<div class="t" style="left:3px;top:409px;font-size:14.4px;color:#000;font-weight:bold;transform-origin:0 0;">Standard-Adresse</div>
<div class="t" style="left:-337px;width:400px;text-align:right;top:430px;font-size:14.0px;color:#161626;font-weight:normal;transform:scaleX(0.91);transform-origin:100% 0;">Kd/Int-Nr.</div>
<div class="t" style="left:-337px;width:400px;text-align:right;top:453px;font-size:14.0px;color:#161626;font-weight:normal;transform:scaleX(0.91);transform-origin:100% 0;">Anrede</div>
<div class="t" style="left:-337px;width:400px;text-align:right;top:476px;font-size:14.0px;color:#161626;font-weight:normal;transform:scaleX(0.91);transform-origin:100% 0;">Name1</div>
<div class="t" style="left:-337px;width:400px;text-align:right;top:499px;font-size:14.0px;color:#161626;font-weight:normal;transform:scaleX(0.91);transform-origin:100% 0;">Name2</div>
<div class="t" style="left:-337px;width:400px;text-align:right;top:522px;font-size:14.0px;color:#161626;font-weight:normal;transform:scaleX(0.91);transform-origin:100% 0;">Name3</div>
<div class="t" style="left:-337px;width:400px;text-align:right;top:545px;font-size:14.0px;color:#161626;font-weight:normal;transform:scaleX(0.91);transform-origin:100% 0;">Straße</div>
<div class="t" style="left:-337px;width:400px;text-align:right;top:568px;font-size:14.0px;color:#161626;font-weight:normal;transform:scaleX(0.91);transform-origin:100% 0;">PLZ Postf.</div>
<div class="t" style="left:-337px;width:400px;text-align:right;top:591px;font-size:14.0px;color:#161626;font-weight:normal;transform:scaleX(0.91);transform-origin:100% 0;">PLZ / Ort</div>
<div class="t" style="left:-337px;width:400px;text-align:right;top:614px;font-size:14.0px;color:#161626;font-weight:normal;transform:scaleX(0.91);transform-origin:100% 0;">Land</div>
<div class="t" style="left:-337px;width:400px;text-align:right;top:637px;font-size:14.0px;color:#161626;font-weight:normal;transform:scaleX(0.91);transform-origin:100% 0;">Telefon</div>
<div class="t" style="left:-337px;width:400px;text-align:right;top:660px;font-size:14.0px;color:#161626;font-weight:normal;transform:scaleX(0.91);transform-origin:100% 0;">Mobil</div>
<div class="t" style="left:-337px;width:400px;text-align:right;top:683px;font-size:14.0px;color:#161626;font-weight:normal;transform:scaleX(0.91);transform-origin:100% 0;">Telefax</div>
<div class="inp" style="left:72px;top:430px;width:78px;height:19px;background:#fff;box-shadow:1px 1px 0 #fff;"></div>
<div class="t" style="left:-249px;width:400px;text-align:right;top:431px;font-size:14.0px;color:#161626;font-weight:normal;transform:scaleX(0.91);transform-origin:100% 0;">8389</div>
<div class="inp" style="left:158px;top:430px;width:78px;height:19px;background:#fff;box-shadow:1px 1px 0 #fff;"></div>
<div class="a" style="left:247px;top:431px;width:20px;height:20px;background:#c6c6c6;border-top:1px solid #d8d8d8;border-left:1px solid #d8d8d8;border-right:1px solid #6e7f99;border-bottom:2px solid #6e7f99;border-radius:2px;"></div>
<svg class="a" style="left:247px;top:431px" width="20" height="20" viewBox="0 0 20 20"><rect x="3" y="3" width="13" height="13" fill="#fff" stroke="#000" stroke-width="1.4"/><line x1="16.5" y1="4" x2="16.5" y2="17" stroke="#f06010" stroke-width="1"/><line x1="3" y1="17.5" x2="17" y2="17.5" stroke="#f06010" stroke-width="1"/><line x1="4.5" y1="5.5" x2="7.5" y2="5.5" stroke="#f06010"/><line x1="4.5" y1="7.5" x2="7" y2="7.5" stroke="#f06010"/><line x1="4.5" y1="9.5" x2="7" y2="9.5" stroke="#f06010"/><line x1="4.5" y1="11.5" x2="8" y2="11.5" stroke="#f06010"/><line x1="4.5" y1="13.5" x2="7.5" y2="13.5" stroke="#f06010"/><rect x="8.5" y="4.5" width="3.5" height="5" fill="#40b0f8"/><path d="M9.5 15.5 L14.5 10.5" stroke="#888" stroke-width="2.2"/><path d="M10 15 L14 11" stroke="#ddd" stroke-width="0.8"/></svg>
<div class="a" style="left:272px;top:431px;width:20px;height:20px;background:#c6c6c6;border-top:1px solid #d8d8d8;border-left:1px solid #d8d8d8;border-right:1px solid #6e7f99;border-bottom:2px solid #6e7f99;border-radius:2px;"></div>
<svg class="a" style="left:272px;top:431px" width="20" height="20" viewBox="0 0 20 20"><rect x="2" y="3" width="13" height="13" fill="#fff" stroke="#000" stroke-width="1.4"/><line x1="15.5" y1="4" x2="15.5" y2="17" stroke="#f06010" stroke-width="1"/><line x1="2" y1="17.5" x2="16" y2="17.5" stroke="#f06010" stroke-width="1"/><line x1="3.5" y1="5.5" x2="6.5" y2="5.5" stroke="#f06010"/><line x1="8" y1="5.5" x2="10" y2="5.5" stroke="#f06010"/><line x1="3.5" y1="7.5" x2="5.5" y2="7.5" stroke="#f06010"/><line x1="3.5" y1="9.5" x2="5.5" y2="9.5" stroke="#f06010"/><line x1="3.5" y1="11.5" x2="5.5" y2="11.5" stroke="#f06010"/><circle cx="9.5" cy="10" r="2.8" fill="#c8f0ff" stroke="#000" stroke-width="1.3"/><line x1="11.5" y1="12" x2="16.5" y2="17" stroke="#000" stroke-width="1.6"/></svg>
<div class="a" style="left:298px;top:431px;width:20px;height:21px;background:#c6c6c6;border-top:1px solid #d8d8d8;border-left:1px solid #d8d8d8;border-right:1px solid #6e7f99;border-bottom:2px solid #6e7f99;border-radius:2px;"></div>
<svg class="a" style="left:298px;top:431px" width="20" height="21" viewBox="0 0 20 21"><rect x="4" y="3" width="4.2" height="4.6" rx="1" fill="#6672f6"/><rect x="4" y="8.5" width="4.2" height="4.6" rx="1" fill="#6672f6"/><rect x="4" y="14" width="4.2" height="4.6" rx="1" fill="#6672f6"/><path d="M5.2 4 L6.5 4.8 L6.8 6.6 L5.2 6.6 Z" fill="#f4f4ff"/><path d="M5.2 9.5 L6.5 10.3 L6.8 12.1 L5.2 12.1 Z" fill="#f4f4ff"/><path d="M5.2 15 L6.5 15.8 L6.8 17.6 L5.2 17.6 Z" fill="#f4f4ff"/><line x1="11" y1="7.5" x2="18" y2="7.5" stroke="#8c8c8c" stroke-width="0.9"/><line x1="10" y1="12.5" x2="13" y2="12.5" stroke="#8c8c8c" stroke-width="0.9"/><line x1="10" y1="17.5" x2="17" y2="17.5" stroke="#8c8c8c" stroke-width="0.9"/><line x1="12.5" y1="10.2" x2="17.8" y2="16.6" stroke="#d81818" stroke-width="2.6"/><line x1="10" y1="7.8" x2="13" y2="10.6" stroke="#f0a830" stroke-width="2.2"/><circle cx="9.3" cy="7.3" r="0.8" fill="#b01010"/></svg>
<div class="inp" style="left:72px;top:454px;width:243px;height:18px;background:#fff;box-shadow:1px 1px 0 #fff;"></div>
<div class="inp" style="left:72px;top:477px;width:243px;height:18px;background:#fff;box-shadow:1px 1px 0 #fff;"></div>
<div class="t" style="left:75px;top:477px;font-size:14.0px;color:#161626;font-weight:normal;transform:scaleX(0.91);transform-origin:0 0;">Möbelhaus Buss</div>
<div class="inp" style="left:72px;top:500px;width:243px;height:18px;background:#fff;box-shadow:1px 1px 0 #fff;"></div>
<div class="t" style="left:75px;top:500px;font-size:14.0px;color:#161626;font-weight:normal;transform:scaleX(0.91);transform-origin:0 0;">GmbH</div>
<div class="inp" style="left:72px;top:523px;width:243px;height:18px;background:#fff;box-shadow:1px 1px 0 #fff;"></div>
<div class="inp" style="left:72px;top:546px;width:192px;height:18px;background:#fff;box-shadow:1px 1px 0 #fff;"></div>
<div class="t" style="left:75px;top:546px;font-size:14.0px;color:#161626;font-weight:normal;transform:scaleX(0.91);transform-origin:0 0;">Kanalstraße ll 1a</div>
<div class="inp" style="left:270px;top:546px;width:45px;height:18px;background:#fff;box-shadow:1px 1px 0 #fff;"></div>
<div class="inp" style="left:72px;top:569px;width:94px;height:18px;background:#fff;box-shadow:1px 1px 0 #fff;"></div>
<div class="t" style="left:-172px;width:400px;text-align:right;top:568px;font-size:14.0px;color:#161626;font-weight:normal;transform:scaleX(0.91);transform-origin:100% 0;">Postfach</div>
<div class="inp" style="left:237px;top:569px;width:78px;height:18px;background:#fff;box-shadow:1px 1px 0 #fff;"></div>
<div class="inp" style="left:72px;top:592px;width:94px;height:18px;background:#fff;box-shadow:1px 1px 0 #fff;"></div>
<div class="t" style="left:75px;top:592px;font-size:14.0px;color:#161626;font-weight:normal;transform:scaleX(0.91);transform-origin:0 0;">26639</div>
<div class="inp" style="left:171px;top:592px;width:144px;height:18px;background:#fff;box-shadow:1px 1px 0 #fff;"></div>
<div class="t" style="left:174px;top:592px;font-size:14.0px;color:#161626;font-weight:normal;transform:scaleX(0.91);transform-origin:0 0;">Wiesmoor</div>
<div class="inp" style="left:72px;top:615px;width:44px;height:18px;background:#fff;box-shadow:1px 1px 0 #fff;"></div>
<div class="t" style="left:75px;top:615px;font-size:14.0px;color:#161626;font-weight:normal;transform:scaleX(0.91);transform-origin:0 0;">DE</div>
<div class="inp" style="left:122px;top:615px;width:193px;height:18px;background:#fff;box-shadow:1px 1px 0 #fff;"></div>
<div class="t" style="left:125px;top:615px;font-size:14.0px;color:#161626;font-weight:normal;transform:scaleX(0.91);transform-origin:0 0;">Deutschland</div>
<div class="inp" style="left:72px;top:638px;width:243px;height:18px;background:#fff;box-shadow:1px 1px 0 #fff;"></div>
<div class="inp" style="left:72px;top:661px;width:243px;height:18px;background:#fff;box-shadow:1px 1px 0 #fff;"></div>
<div class="inp" style="left:72px;top:684px;width:243px;height:18px;background:#fff;box-shadow:1px 1px 0 #fff;"></div>
<div class="btn" style="left:73px;top:718px;width:108px;height:22px;"></div>
<div class="t" style="left:73.0px;width:110px;text-align:center;top:720px;font-size:14.0px;color:#161626;font-weight:normal;transform:scaleX(0.91);transform-origin:50% 0;">Int. übernehmen</div>
<div class="btn" style="left:209px;top:718px;width:107px;height:22px;"></div>
<div class="t" style="left:209.0px;width:109px;text-align:center;top:720px;font-size:14.0px;color:#161626;font-weight:normal;transform:scaleX(0.91);transform-origin:50% 0;">Bearbeiten</div>
<div class="a" style="left:333px;top:405px;width:881px;height:24px;background:#d6d6d6;"></div>
<div class="a" style="left:333.5px;top:405px;width:46.5px;height:22px;background:#94a3b7;border-radius:4px 4px 0 0;"></div>
<div class="t" style="left:256.75px;width:200px;text-align:center;top:407px;font-size:14.0px;color:#161626;font-weight:normal;transform:scaleX(0.91);transform-origin:50% 0;">Detail</div>
<div class="a" style="left:383px;top:405px;width:59px;height:22px;background:#94a3b7;border-radius:4px 4px 0 0;"></div>
<div class="t" style="left:312.5px;width:200px;text-align:center;top:407px;font-size:14.0px;color:#161626;font-weight:normal;transform:scaleX(0.91);transform-origin:50% 0;">Verband</div>
<div class="a" style="left:446px;top:405px;width:51.5px;height:22px;background:#94a3b7;border-radius:4px 4px 0 0;"></div>
<div class="t" style="left:371.75px;width:200px;text-align:center;top:407px;font-size:14.0px;color:#161626;font-weight:normal;transform:scaleX(0.91);transform-origin:50% 0;">Bonität</div>
<div class="a" style="left:501px;top:405px;width:61px;height:22px;background:#94a3b7;border-radius:4px 4px 0 0;"></div>
<div class="t" style="left:431.5px;width:200px;text-align:center;top:407px;font-size:14.0px;color:#161626;font-weight:normal;transform:scaleX(0.91);transform-origin:50% 0;">Mandant</div>
<div class="a" style="left:565.5px;top:405px;width:107.5px;height:22px;background:#94a3b7;border-radius:4px 4px 0 0;"></div>
<div class="t" style="left:519.25px;width:200px;text-align:center;top:407px;font-size:14.0px;color:#161626;font-weight:normal;transform:scaleX(0.91);transform-origin:50% 0;">Vertriebsschiene</div>
<div class="a" style="left:677.5px;top:405px;width:65.5px;height:25px;background:#d6d6d6;border-left:1px solid #fff;border-top:1px solid #fff;border-right:2px solid #8a98ac;border-radius:4px 4px 0 0;"></div>
<div class="t" style="left:610.25px;width:200px;text-align:center;top:407px;font-size:14.0px;color:#161626;font-weight:normal;transform:scaleX(0.91);transform-origin:50% 0;">Adressen</div>
<div class="a" style="left:746.5px;top:405px;width:58.5px;height:22px;background:#94a3b7;border-radius:4px 4px 0 0;"></div>
<div class="t" style="left:675.75px;width:200px;text-align:center;top:407px;font-size:14.0px;color:#161626;font-weight:normal;transform:scaleX(0.91);transform-origin:50% 0;">Statistik</div>
<div class="a" style="left:808.5px;top:405px;width:41.0px;height:22px;background:#94a3b7;border-radius:4px 4px 0 0;"></div>
<div class="t" style="left:729.0px;width:200px;text-align:center;top:407px;font-size:14.0px;color:#161626;font-weight:normal;transform:scaleX(0.91);transform-origin:50% 0;">Notiz</div>
<div class="a" style="left:853px;top:405px;width:100.5px;height:22px;background:#94a3b7;border-radius:4px 4px 0 0;"></div>
<div class="t" style="left:803.25px;width:200px;text-align:center;top:407px;font-size:14.0px;color:#161626;font-weight:normal;transform:scaleX(0.91);transform-origin:50% 0;">Kunden-Gruppe</div>
<div class="a" style="left:957px;top:405px;width:105px;height:22px;background:#94a3b7;border-radius:4px 4px 0 0;"></div>
<div class="t" style="left:909.5px;width:200px;text-align:center;top:407px;font-size:14.0px;color:#161626;font-weight:normal;transform:scaleX(0.91);transform-origin:50% 0;">Ansprechpartner</div>
<div class="a" style="left:1066px;top:405px;width:88px;height:22px;background:#94a3b7;border-radius:4px 4px 0 0;"></div>
<div class="t" style="left:1010.0px;width:200px;text-align:center;top:407px;font-size:14.0px;color:#161626;font-weight:normal;transform:scaleX(0.91);transform-origin:50% 0;">Anlieferzeiten</div>
<div class="a" style="left:1158px;top:405px;width:40px;height:22px;background:#94a3b7;border-radius:4px 4px 0 0;"></div>
<div class="t" style="left:1078.0px;width:200px;text-align:center;top:407px;font-size:14.0px;color:#161626;font-weight:normal;transform:scaleX(0.91);transform-origin:50% 0;">Profil</div>
<div class="a" style="left:334px;top:428px;width:880px;height:316px;background:#d6d6d6;border-left:1px solid #fff;border-top:1px solid #fff;border-right:1px solid #8796ac;"></div>
<div class="a" style="left:678px;top:427px;width:64px;height:3px;background:#d6d6d6;"></div>
<div class="t" style="left:16px;width:400px;text-align:right;top:437px;font-size:14.0px;color:#161626;font-weight:normal;transform:scaleX(0.91);transform-origin:100% 0;">Adress-Nr.</div>
<div class="t" style="left:16px;width:400px;text-align:right;top:460px;font-size:14.0px;color:#161626;font-weight:normal;transform:scaleX(0.91);transform-origin:100% 0;">Anrede</div>
<div class="t" style="left:16px;width:400px;text-align:right;top:483px;font-size:14.0px;color:#161626;font-weight:normal;transform:scaleX(0.91);transform-origin:100% 0;">Name1</div>
<div class="t" style="left:16px;width:400px;text-align:right;top:506px;font-size:14.0px;color:#161626;font-weight:normal;transform:scaleX(0.91);transform-origin:100% 0;">Name2</div>
<div class="t" style="left:16px;width:400px;text-align:right;top:529px;font-size:14.0px;color:#161626;font-weight:normal;transform:scaleX(0.91);transform-origin:100% 0;">Name3</div>
<div class="t" style="left:16px;width:400px;text-align:right;top:552px;font-size:14.0px;color:#161626;font-weight:normal;transform:scaleX(0.91);transform-origin:100% 0;">PLZ-/ Postf.</div>
<div class="t" style="left:16px;width:400px;text-align:right;top:576px;font-size:14.0px;color:#161626;font-weight:normal;transform:scaleX(0.91);transform-origin:100% 0;">Straße/ HNr.</div>
<div class="inp" style="left:425px;top:437px;width:62px;height:19px;background:#fff;box-shadow:1px 1px 0 #fff;"></div>
<div class="t" style="left:88px;width:400px;text-align:right;top:438px;font-size:14.0px;color:#161626;font-weight:normal;transform:scaleX(0.91);transform-origin:100% 0;">0</div>
<div class="inp" style="left:425px;top:460px;width:62px;height:19px;background:#fff;box-shadow:1px 1px 0 #fff;"></div>
<div class="inp" style="left:425px;top:483px;width:243px;height:19px;background:#fff;box-shadow:1px 1px 0 #fff;"></div>
<div class="t" style="left:428px;top:484px;font-size:14.0px;color:#161626;font-weight:normal;transform:scaleX(0.91);transform-origin:0 0;">Möbelhaus Buss</div>
<div class="inp" style="left:425px;top:506px;width:243px;height:19px;background:#fff;box-shadow:1px 1px 0 #fff;"></div>
<div class="t" style="left:428px;top:507px;font-size:14.0px;color:#161626;font-weight:normal;transform:scaleX(0.91);transform-origin:0 0;">GmbH</div>
<div class="inp" style="left:425px;top:529px;width:243px;height:19px;background:#fff;box-shadow:1px 1px 0 #fff;"></div>
<div class="inp" style="left:425px;top:552px;width:62px;height:19px;background:#fff;box-shadow:1px 1px 0 #fff;"></div>
<div class="inp" style="left:491px;top:552px;width:177px;height:19px;background:#fff;box-shadow:1px 1px 0 #fff;"></div>
<div class="inp" style="left:425px;top:576px;width:194px;height:19px;background:#fff;box-shadow:1px 1px 0 #fff;"></div>
<div class="t" style="left:428px;top:577px;font-size:14.0px;color:#161626;font-weight:normal;transform:scaleX(0.91);transform-origin:0 0;">Kanalstraße ll 1a</div>
<div class="inp" style="left:623px;top:576px;width:45px;height:19px;background:#fff;box-shadow:1px 1px 0 #fff;"></div>
<div class="t" style="left:247px;width:400px;text-align:right;top:437px;font-size:14.0px;color:#161626;font-weight:normal;transform:scaleX(0.91);transform-origin:100% 0;">Gelöscht</div>
<div class="a" style="left:655px;top:442px;width:12px;height:12px;background:#fff;border-top:1px solid #333;border-left:1px solid #333;border-right:1px solid #fff;border-bottom:1px solid #fff;"></div>
<div class="t" style="left:353px;width:400px;text-align:right;top:437px;font-size:14.0px;color:#161626;font-weight:normal;transform:scaleX(0.91);transform-origin:100% 0;">PLZ-/ Ort</div>
<div class="t" style="left:353px;width:400px;text-align:right;top:460px;font-size:14.0px;color:#161626;font-weight:normal;transform:scaleX(0.91);transform-origin:100% 0;">Land</div>
<div class="t" style="left:353px;width:400px;text-align:right;top:483px;font-size:14.0px;color:#161626;font-weight:normal;transform:scaleX(0.91);transform-origin:100% 0;">Fracht-Land</div>
<div class="t" style="left:353px;width:400px;text-align:right;top:507px;font-size:14.0px;color:#161626;font-weight:normal;transform:scaleX(0.91);transform-origin:100% 0;">Telefon</div>
<div class="t" style="left:353px;width:400px;text-align:right;top:530px;font-size:14.0px;color:#161626;font-weight:normal;transform:scaleX(0.91);transform-origin:100% 0;">Mobil</div>
<div class="t" style="left:353px;width:400px;text-align:right;top:553px;font-size:14.0px;color:#161626;font-weight:normal;transform:scaleX(0.91);transform-origin:100% 0;">Telefax</div>
<div class="t" style="left:353px;width:400px;text-align:right;top:576px;font-size:14.0px;color:#161626;font-weight:normal;transform:scaleX(0.91);transform-origin:100% 0;">Email</div>
<div class="t" style="left:353px;width:400px;text-align:right;top:599px;font-size:14.0px;color:#161626;font-weight:normal;transform:scaleX(0.91);transform-origin:100% 0;">Internet</div>
<div class="inp" style="left:762px;top:437px;width:62px;height:19px;background:#fff;box-shadow:1px 1px 0 #fff;"></div>
<div class="t" style="left:765px;top:438px;font-size:14.0px;color:#161626;font-weight:normal;transform:scaleX(0.91);transform-origin:0 0;">26639</div>
<div class="inp" style="left:828px;top:437px;width:178px;height:19px;background:#fff;box-shadow:1px 1px 0 #fff;"></div>
<div class="t" style="left:831px;top:438px;font-size:14.0px;color:#161626;font-weight:normal;transform:scaleX(0.91);transform-origin:0 0;">Wiesmoor</div>
<div class="inp" style="left:762px;top:460px;width:45px;height:19px;background:#fff;box-shadow:1px 1px 0 #fff;"></div>
<div class="t" style="left:765px;top:461px;font-size:14.0px;color:#161626;font-weight:normal;transform:scaleX(0.91);transform-origin:0 0;">DE</div>
<div class="inp" style="left:811px;top:460px;width:161px;height:19px;background:#fff;box-shadow:1px 1px 0 #fff;"></div>
<div class="t" style="left:814px;top:461px;font-size:14.0px;color:#161626;font-weight:normal;transform:scaleX(0.91);transform-origin:0 0;">Deutschland</div>
<div class="inp" style="left:762px;top:483px;width:45px;height:19px;background:#fff;box-shadow:1px 1px 0 #fff;"></div>
<div class="inp" style="left:811px;top:483px;width:161px;height:19px;background:#fff;box-shadow:1px 1px 0 #fff;"></div>
<div class="inp" style="left:762px;top:507px;width:161px;height:19px;background:#fff;box-shadow:1px 1px 0 #fff;"></div>
<div class="inp" style="left:762px;top:530px;width:161px;height:19px;background:#fff;box-shadow:1px 1px 0 #fff;"></div>
<div class="inp" style="left:762px;top:553px;width:161px;height:19px;background:#fff;box-shadow:1px 1px 0 #fff;"></div>
<div class="inp" style="left:762px;top:576px;width:161px;height:19px;background:#fff;box-shadow:1px 1px 0 #fff;"></div>
<div class="t" style="left:765px;top:577px;font-size:14.0px;color:#161626;font-weight:normal;transform:scaleX(0.91);transform-origin:0 0;">info@moebel-buss.de</div>
<div class="inp" style="left:762px;top:599px;width:161px;height:19px;background:#fff;box-shadow:1px 1px 0 #fff;"></div>
<div class="a" style="left:929px;top:578px;width:20px;height:20px;background:#c6c6c6;border-top:1px solid #f0f0f0;border-left:1px solid #f0f0f0;border-right:1px solid #7d8ca3;border-bottom:2px solid #7d8ca3;border-radius:2px;"></div>
<svg class="a" style="left:929px;top:578px" width="20" height="20" viewBox="0 0 20 20"><rect x="2.5" y="2.7" width="15" height="10.5" rx="1.5" fill="#d8ecff" stroke="#3a90e0" stroke-width="1.2"/><rect x="4" y="4" width="12" height="8" fill="#f4faff"/><path d="M3.5 3.8 L10 9 L16.5 3.8" fill="none" stroke="#7ab4ea" stroke-width="1.1"/></svg>
<div class="a" style="left:929px;top:601px;width:20px;height:20px;background:#c6c6c6;border-top:1px solid #f0f0f0;border-left:1px solid #f0f0f0;border-right:1px solid #7d8ca3;border-bottom:2px solid #7d8ca3;border-radius:2px;"></div>
<svg class="a" style="left:929px;top:601px" width="20" height="20" viewBox="0 0 20 20"><path d="M7 1.8 L13 1.8 L17.2 6 L17.2 12 L13 16.2 L7 16.2 L2.8 12 L2.8 6 Z" fill="#2a3aa0"/><circle cx="10" cy="9" r="5.6" fill="#4a8ad8"/><path d="M11 4 L14 6 L13 9 Z" fill="#a8d040"/><path d="M6 10 L8 13 L6 13 Z" fill="#90c040"/><path d="M10.5 3.5 L11.5 12.5 L9.5 11 L7.5 15 L6 14 L8 10.5 L5.5 10.5 Z" fill="#fafafa"/></svg>
<div class="t" style="left:660px;width:400px;text-align:right;top:437px;font-size:14.0px;color:#161626;font-weight:normal;transform:scaleX(0.91);transform-origin:100% 0;">ILN-Nr.</div>
<div class="inp" style="left:1069px;top:437px;width:128px;height:20px;background:#fff;box-shadow:1px 1px 0 #fff;"></div>
<div class="btn" style="left:1091px;top:590px;width:108px;height:22px;"></div>
<div class="t" style="left:1091.0px;width:110px;text-align:center;top:592px;font-size:14.0px;color:#161626;font-weight:normal;transform:scaleX(0.91);transform-origin:50% 0;">Bearbeiten</div>
<div class="a" style="left:350px;top:631px;width:131px;height:24px;background:#c2c2c2;border-top:1px solid #f2f2f2;border-left:1px solid #f2f2f2;border-right:1px solid #5d7291;border-bottom:1px solid #5d7291;border-radius:3px;box-shadow:inset -1px -1px 0 #a0aabb;"></div>
<div class="t" style="left:315.5px;width:200px;text-align:center;top:634px;font-size:14.0px;color:#161626;font-weight:normal;transform:scaleX(0.91);transform-origin:50% 0;">Mandant</div>
<div class="a" style="left:482px;top:631px;width:41px;height:24px;background:#c2c2c2;border-top:1px solid #f2f2f2;border-left:1px solid #f2f2f2;border-right:1px solid #5d7291;border-bottom:1px solid #5d7291;border-radius:3px;box-shadow:inset -1px -1px 0 #a0aabb;"></div>
<div class="t" style="left:402.5px;width:200px;text-align:center;top:634px;font-size:14.0px;color:#161626;font-weight:normal;transform:scaleX(0.91);transform-origin:50% 0;">Art</div>
<div class="a" style="left:524px;top:631px;width:172px;height:24px;background:#c2c2c2;border-top:1px solid #f2f2f2;border-left:1px solid #f2f2f2;border-right:1px solid #5d7291;border-bottom:1px solid #5d7291;border-radius:3px;box-shadow:inset -1px -1px 0 #a0aabb;"></div>
<div class="t" style="left:510.0px;width:200px;text-align:center;top:634px;font-size:14.0px;color:#161626;font-weight:normal;transform:scaleX(0.91);transform-origin:50% 0;">Telefon</div>
<div class="a" style="left:697px;top:631px;width:172px;height:24px;background:#c2c2c2;border-top:1px solid #f2f2f2;border-left:1px solid #f2f2f2;border-right:1px solid #5d7291;border-bottom:1px solid #5d7291;border-radius:3px;box-shadow:inset -1px -1px 0 #a0aabb;"></div>
<div class="t" style="left:683.0px;width:200px;text-align:center;top:634px;font-size:14.0px;color:#161626;font-weight:normal;transform:scaleX(0.91);transform-origin:50% 0;">Telefax</div>
<div class="a" style="left:870px;top:631px;width:173px;height:24px;background:#c2c2c2;border-top:1px solid #f2f2f2;border-left:1px solid #f2f2f2;border-right:1px solid #5d7291;border-bottom:1px solid #5d7291;border-radius:3px;box-shadow:inset -1px -1px 0 #a0aabb;"></div>
<div class="t" style="left:856.5px;width:200px;text-align:center;top:634px;font-size:14.0px;color:#161626;font-weight:normal;transform:scaleX(0.91);transform-origin:50% 0;">Email</div>
<div class="a" style="left:1044px;top:631px;width:81px;height:24px;background:#c2c2c2;border-top:1px solid #f2f2f2;border-left:1px solid #f2f2f2;border-right:1px solid #5d7291;border-bottom:1px solid #5d7291;border-radius:3px;box-shadow:inset -1px -1px 0 #a0aabb;"></div>
<div class="t" style="left:984.5px;width:200px;text-align:center;top:634px;font-size:14.0px;color:#161626;font-weight:normal;transform:scaleX(0.91);transform-origin:50% 0;">AB-Druck</div>
<div class="inp" style="left:350px;top:659px;width:128px;height:18px;background:#ddffff;box-shadow:1px 1px 0 #fff;"></div>
<div class="inp" style="left:482px;top:659px;width:38px;height:18px;background:#ddffff;box-shadow:1px 1px 0 #fff;"></div>
<div class="inp" style="left:524px;top:659px;width:169px;height:18px;background:#ddffff;box-shadow:1px 1px 0 #fff;"></div>
<div class="inp" style="left:697px;top:659px;width:169px;height:18px;background:#ddffff;box-shadow:1px 1px 0 #fff;"></div>
<div class="inp" style="left:870px;top:659px;width:170px;height:18px;background:#ddffff;box-shadow:1px 1px 0 #fff;"></div>
<div class="inp" style="left:1044px;top:659px;width:78px;height:18px;background:#ddffff;box-shadow:1px 1px 0 #fff;"></div>
<div class="inp" style="left:350px;top:682px;width:128px;height:18px;background:#fff;box-shadow:1px 1px 0 #fff;"></div>
<div class="inp" style="left:482px;top:682px;width:38px;height:18px;background:#fff;box-shadow:1px 1px 0 #fff;"></div>
<div class="inp" style="left:524px;top:682px;width:169px;height:18px;background:#fff;box-shadow:1px 1px 0 #fff;"></div>
<div class="inp" style="left:697px;top:682px;width:169px;height:18px;background:#fff;box-shadow:1px 1px 0 #fff;"></div>
<div class="inp" style="left:870px;top:682px;width:170px;height:18px;background:#fff;box-shadow:1px 1px 0 #fff;"></div>
<div class="inp" style="left:1044px;top:682px;width:78px;height:18px;background:#fff;box-shadow:1px 1px 0 #fff;"></div>
<div class="inp" style="left:350px;top:705px;width:128px;height:18px;background:#fff;box-shadow:1px 1px 0 #fff;"></div>
<div class="inp" style="left:482px;top:705px;width:38px;height:18px;background:#fff;box-shadow:1px 1px 0 #fff;"></div>
<div class="inp" style="left:524px;top:705px;width:169px;height:18px;background:#fff;box-shadow:1px 1px 0 #fff;"></div>
<div class="inp" style="left:697px;top:705px;width:169px;height:18px;background:#fff;box-shadow:1px 1px 0 #fff;"></div>
<div class="inp" style="left:870px;top:705px;width:170px;height:18px;background:#fff;box-shadow:1px 1px 0 #fff;"></div>
<div class="inp" style="left:1044px;top:705px;width:78px;height:18px;background:#fff;box-shadow:1px 1px 0 #fff;"></div>
<div class="t" style="left:354px;top:659px;font-size:14.0px;color:#161626;font-weight:normal;transform:scaleX(0.91);transform-origin:0 0;">&lt;Alle&gt;</div>
<div class="t" style="left:485px;top:659px;font-size:14.0px;color:#161626;font-weight:normal;transform:scaleX(0.91);transform-origin:0 0;">AB</div>
<div class="t" style="left:1131px;top:633px;font-size:14.0px;color:#161626;font-weight:normal;transform:scaleX(0.91);transform-origin:0 0;">Gelöscht</div>
<div class="a" style="left:1144px;top:659px;width:19px;height:21px;background:#ddffff;"></div>
<div class="a" style="left:1145px;top:663px;width:12px;height:12px;background:#fff;border-top:1px solid #333;border-left:1px solid #333;border-right:1px solid #eee;border-bottom:1px solid #eee;"></div>
<div class="a" style="left:1145px;top:686px;width:12px;height:12px;background:#d0d0d0;border-top:1px solid #888;border-left:1px solid #888;border-right:1px solid #f0f0f0;border-bottom:1px solid #f0f0f0;"></div>
<div class="a" style="left:1145px;top:709px;width:12px;height:12px;background:#d0d0d0;border-top:1px solid #888;border-left:1px solid #888;border-right:1px solid #f0f0f0;border-bottom:1px solid #f0f0f0;"></div>
<div class="a" style="left:1167px;top:655px;width:15px;height:69px;background:#c8c8c8;border:1px solid #8797ae;border-radius:7px;"></div>
<div class="a" style="left:1168px;top:670px;width:13px;height:1px;background:#f0f0f0;"></div>
<div class="a" style="left:1168px;top:708px;width:13px;height:1px;background:#f0f0f0;"></div>
<svg class="a" style="left:1169px;top:658px" width="11" height="10"><path d="M1.5 7 L5.5 3 L9.5 7 Z" fill="#5f7090"/></svg>
<svg class="a" style="left:1170px;top:680px" width="10" height="20"><rect x="2" y="5" width="1.5" height="1.5" fill="#f4f4f4"/><rect x="5" y="3" width="1.5" height="1.5" fill="#f4f4f4"/><rect x="2" y="9" width="1.5" height="1.5" fill="#f4f4f4"/><rect x="5" y="11" width="1.5" height="1.5" fill="#f4f4f4"/></svg>
<svg class="a" style="left:1169px;top:711px" width="11" height="10"><path d="M1.5 3 L5.5 7 L9.5 3 Z" fill="#5f7090"/></svg>
<div class="a" style="left:378px;top:4px;width:384px;height:54px;background:#fff;border:1px solid #2f5987;"></div>
<div class="t" style="left:390px;top:9px;font-size:16.8px;color:#27558a;font-weight:normal;transform-origin:0 0;-webkit-text-stroke:0;">Absteigende und Aufsteigende Sortierung durch</div>
<div class="t" style="left:390px;top:31px;font-size:16.8px;color:#27558a;font-weight:normal;transform-origin:0 0;-webkit-text-stroke:0;">Anklicken mit der rechten Maustaste möglich.</div>
<svg class="a" style="left:0;top:0" width="1217" height="746"><line x1="399.6" y1="58" x2="295.1448172107431" y2="210.74554431489886" stroke="#4a8ad0" stroke-width="1"/><path d="M289.5 219 L290.60486658393745 207.64089484899017 L299.68476783754875 213.85019378080756 Z" fill="#4a8ad0"/><line x1="485.2" y1="58" x2="437.6928717760953" y2="209.4583691890824" stroke="#4a8ad0" stroke-width="1"/><path d="M434.7 219 L432.4449748300906 207.81228971222998 L442.94076872209996 211.1044486659348 Z" fill="#4a8ad0"/><line x1="628.8" y1="58" x2="638.8605925415507" y2="215.0204630316793" stroke="#4a8ad0" stroke-width="1"/><path d="M639.5 225 L633.3718472089743 215.3721371338264 L644.3493378741271 214.66878892953218 Z" fill="#4a8ad0"/><line x1="730.5" y1="58" x2="829.3100633111275" y2="216.51374229546855" stroke="#4a8ad0" stroke-width="1"/><path d="M834.6 225 L824.6426215736352 219.4232074743485 L833.9775050486197 213.6042771165886 Z" fill="#4a8ad0"/></svg>
</body></html>
